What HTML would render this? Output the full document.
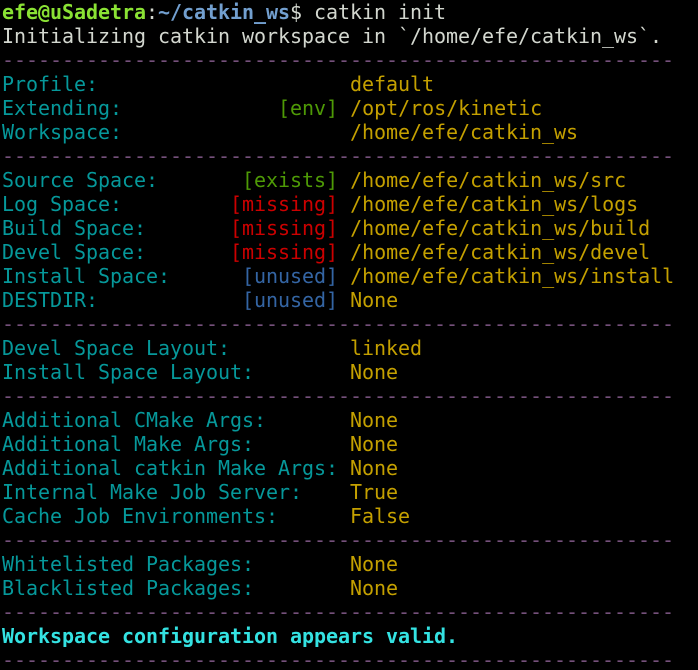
<!DOCTYPE html>
<html><head><style>
html,body{margin:0;padding:0;background:#000;width:698px;height:670px;overflow:hidden}
pre{margin:0;padding:0 0 0 2px;font-family:"DejaVu Sans Mono","Liberation Mono",monospace;font-size:20px;letter-spacing:-0.04px;line-height:24px;color:#D3D7CF;white-space:pre}
.g{color:#8AE234;font-weight:bold}.b{color:#729FCF;font-weight:bold}
.c{color:#06989A}.y{color:#C4A000}.r{color:#CC0000}.gr{color:#4E9A06}.bl{color:#3465A4}
.d{color:#75507B}.v{color:#34E2E2;font-weight:bold}
</style></head><body><pre><span class="g">efe@uSadetra</span>:<span class="b">~/catkin_ws</span>$ catkin init
Initializing catkin workspace in `/home/efe/catkin_ws`.
<span class="d">--------------------------------------------------------</span>
<span class="c">Profile:                     </span><span class="y">default</span>
<span class="c">Extending:             </span><span class="gr">[env]</span> <span class="y">/opt/ros/kinetic</span>
<span class="c">Workspace:                   </span><span class="y">/home/efe/catkin_ws</span>
<span class="d">--------------------------------------------------------</span>
<span class="c">Source Space:       </span><span class="gr">[exists]</span> <span class="y">/home/efe/catkin_ws/src</span>
<span class="c">Log Space:         </span><span class="r">[missing]</span> <span class="y">/home/efe/catkin_ws/logs</span>
<span class="c">Build Space:       </span><span class="r">[missing]</span> <span class="y">/home/efe/catkin_ws/build</span>
<span class="c">Devel Space:       </span><span class="r">[missing]</span> <span class="y">/home/efe/catkin_ws/devel</span>
<span class="c">Install Space:      </span><span class="bl">[unused]</span> <span class="y">/home/efe/catkin_ws/install</span>
<span class="c">DESTDIR:            </span><span class="bl">[unused]</span> <span class="y">None</span>
<span class="d">--------------------------------------------------------</span>
<span class="c">Devel Space Layout:          </span><span class="y">linked</span>
<span class="c">Install Space Layout:        </span><span class="y">None</span>
<span class="d">--------------------------------------------------------</span>
<span class="c">Additional CMake Args:       </span><span class="y">None</span>
<span class="c">Additional Make Args:        </span><span class="y">None</span>
<span class="c">Additional catkin Make Args: </span><span class="y">None</span>
<span class="c">Internal Make Job Server:    </span><span class="y">True</span>
<span class="c">Cache Job Environments:      </span><span class="y">False</span>
<span class="d">--------------------------------------------------------</span>
<span class="c">Whitelisted Packages:        </span><span class="y">None</span>
<span class="c">Blacklisted Packages:        </span><span class="y">None</span>
<span class="d">--------------------------------------------------------</span>
<span class="v">Workspace configuration appears valid.</span>
<span class="d">--------------------------------------------------------</span></pre></body></html>
